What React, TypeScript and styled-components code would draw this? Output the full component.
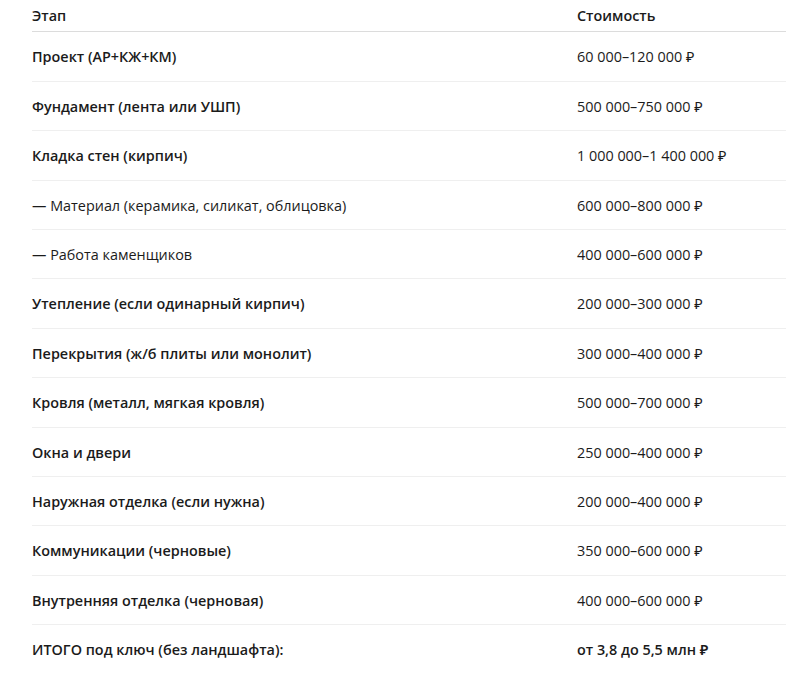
import React from "react";
import styled, { createGlobalStyle } from "styled-components";

interface Row {
  stage: string;
  cost: string;
  sub?: boolean;
  total?: boolean;
}

const rows: Row[] = [
  { stage: "Проект (АР+КЖ+КМ)", cost: "60 000–120 000 ₽" },
  { stage: "Фундамент (лента или УШП)", cost: "500 000–750 000 ₽" },
  { stage: "Кладка стен (кирпич)", cost: "1 000 000–1 400 000 ₽" },
  { stage: "— Материал (керамика, силикат, облицовка)", cost: "600 000–800 000 ₽", sub: true },
  { stage: "— Работа каменщиков", cost: "400 000–600 000 ₽", sub: true },
  { stage: "Утепление (если одинарный кирпич)", cost: "200 000–300 000 ₽" },
  { stage: "Перекрытия (ж/б плиты или монолит)", cost: "300 000–400 000 ₽" },
  { stage: "Кровля (металл, мягкая кровля)", cost: "500 000–700 000 ₽" },
  { stage: "Окна и двери", cost: "250 000–400 000 ₽" },
  { stage: "Наружная отделка (если нужна)", cost: "200 000–400 000 ₽" },
  { stage: "Коммуникации (черновые)", cost: "350 000–600 000 ₽" },
  { stage: "Внутренняя отделка (черновая)", cost: "400 000–600 000 ₽" },
  { stage: "ИТОГО под ключ (без ландшафта):", cost: "от 3,8 до 5,5 млн ₽", total: true },
];

const GlobalStyle = createGlobalStyle`
  html, body {
    margin: 0;
    padding: 0;
    background: #ffffff;
  }
  body {
    font-family: "Open Sans", "Noto Sans", sans-serif;
    color: #1b1b1b;
  }
`;

const Wrapper = styled.div`
  padding-left: 32px;
`;

const Table = styled.div`
  display: grid;
  grid-template-columns: 545px 1fr;
  font-size: 14.4px;
  line-height: 18.4px;
`;

const HeadCell = styled.div`
  padding: 7px 0 6px;
  font-weight: 600;
  border-bottom: 1px solid #dcdcdc;
`;

const Cell = styled.div<{ $bold?: boolean; $last?: boolean }>`
  padding: 16px 0 14px;
  font-weight: ${(p) => (p.$bold ? 600 : 400)};
  border-bottom: 1px solid ${(p) => (p.$last ? "transparent" : "#efefef")};
  white-space: nowrap;
`;

export default function App() {
  return (
    <>
      <GlobalStyle />
      <Wrapper>
        <Table>
          <HeadCell>Этап</HeadCell>
          <HeadCell>Стоимость</HeadCell>
          {rows.map((r, i) => {
            const last = i === rows.length - 1;
            return (
              <React.Fragment key={r.stage}>
                <Cell $bold={!r.sub} $last={last}>
                  {r.stage}
                </Cell>
                <Cell $bold={r.total} $last={last}>
                  {r.cost}
                </Cell>
              </React.Fragment>
            );
          })}
        </Table>
      </Wrapper>
    </>
  );
}
